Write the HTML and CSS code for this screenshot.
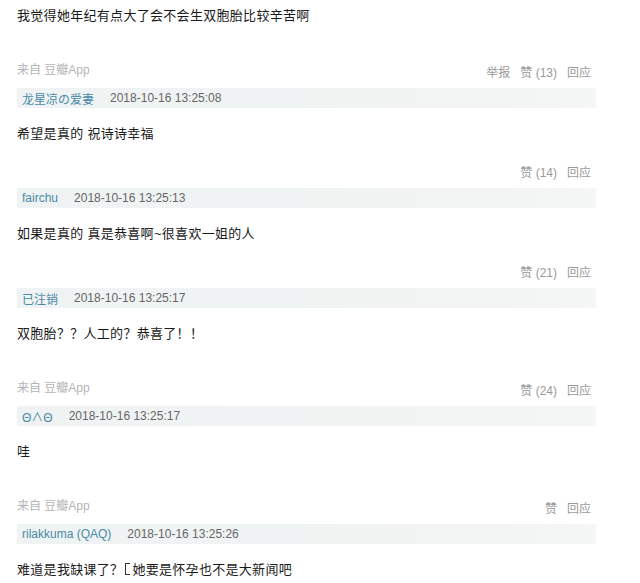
FILE: index.html
```html
<!DOCTYPE html>
<html lang="zh-CN">

<head>
  <meta charset="UTF-8">
  <meta name="viewport" content="width=device-width, initial-scale=1.0">
  <title>回应</title>
  <link rel="stylesheet" href="styles.css">
</head>

<body>

  <div class="thread">
    <p class="topic">我觉得她年纪有点大了会不会生双胞胎比较辛苦啊</p>
    <div class="foot hasSrc">
      <span class="src">来自 豆瓣App</span>
      <span class="acts"><a>举报</a><a>赞 (13)</a><a>回应</a></span>
    </div>

    <div class="reply">
      <div class="meta"><span class="user">龙星凉の爱妻</span><span class="time">2018-10-16 13:25:08</span></div>
      <p class="text">希望是真的 祝诗诗幸福</p>
      <div class="foot">
        <span class="acts"><a>赞 (14)</a><a>回应</a></span>
      </div>
    </div>

    <div class="reply">
      <div class="meta"><span class="user">fairchu</span><span class="time">2018-10-16 13:25:13</span></div>
      <p class="text">如果是真的 真是恭喜啊~很喜欢一姐的人</p>
      <div class="foot">
        <span class="acts"><a>赞 (21)</a><a>回应</a></span>
      </div>
    </div>

    <div class="reply">
      <div class="meta"><span class="user">已注销</span><span class="time">2018-10-16 13:25:17</span></div>
      <p class="text">双胞胎？？人工的？恭喜了！！</p>
      <div class="foot hasSrc">
        <span class="src">来自 豆瓣App</span>
        <span class="acts"><a>赞 (24)</a><a>回应</a></span>
      </div>
    </div>

    <div class="reply">
      <div class="meta"><span class="user">Θ∧Θ</span><span class="time">2018-10-16 13:25:17</span></div>
      <p class="text">哇</p>
      <div class="foot hasSrc">
        <span class="src">来自 豆瓣App</span>
        <span class="acts"><a>赞</a><a>回应</a></span>
      </div>
    </div>

    <div class="reply">
      <div class="meta"><span class="user">rilakkuma (QAQ)</span><span class="time">2018-10-16 13:25:26</span></div>
      <p class="text">难道是我缺课了？<span class="missing"></span>她要是怀孕也不是大新闻吧</p>
    </div>
  </div>

</body>

</html>
```

FILE: styles.css
```css
body {
  margin: 0;
  padding: 6px 0 0 17px;
  background: #fff;
  font-family: "Liberation Sans", "Noto Sans CJK SC", sans-serif;
  color: #1a1a1a;
  overflow: hidden;
}

.thread {
  width: 579px;
}

.topic,
.text {
  margin: 0;
  font-size: 13px;
  letter-spacing: 0.3px;
  line-height: 20px;
}

.text {
  margin-top: 16px;
}

.foot {
  display: flex;
  justify-content: space-between;
  align-items: flex-start;
  height: 20px;
  margin-top: 18px;
  margin-bottom: 6px;
  font-size: 12px;
  line-height: 17px;
}

.hasSrc {
  margin-top: 36px;
}

.src {
  color: #b4b4b4;
}

.acts {
  display: flex;
  gap: 10px;
  margin-left: auto;
  padding: 3px 5px 0 0;
}

.acts a {
  color: #9a9a9a;
}

.meta {
  display: flex;
  gap: 16px;
  height: 20px;
  padding-left: 5px;
  align-items: center;
  background: linear-gradient(to right, #eff3f3, #f2f4f4 80%, #f5f6f6);
  font-size: 12px;
}

.user {
  color: #4a8aa6;
}

.time {
  color: #666;
}

/* glyph that did not render in the original */
.missing {
  display: inline-block;
  width: 4px;
  height: 10px;
  margin: 0 2px;
  border: 1px solid #333;
  border-right: none;
  vertical-align: -1px;
}
```
